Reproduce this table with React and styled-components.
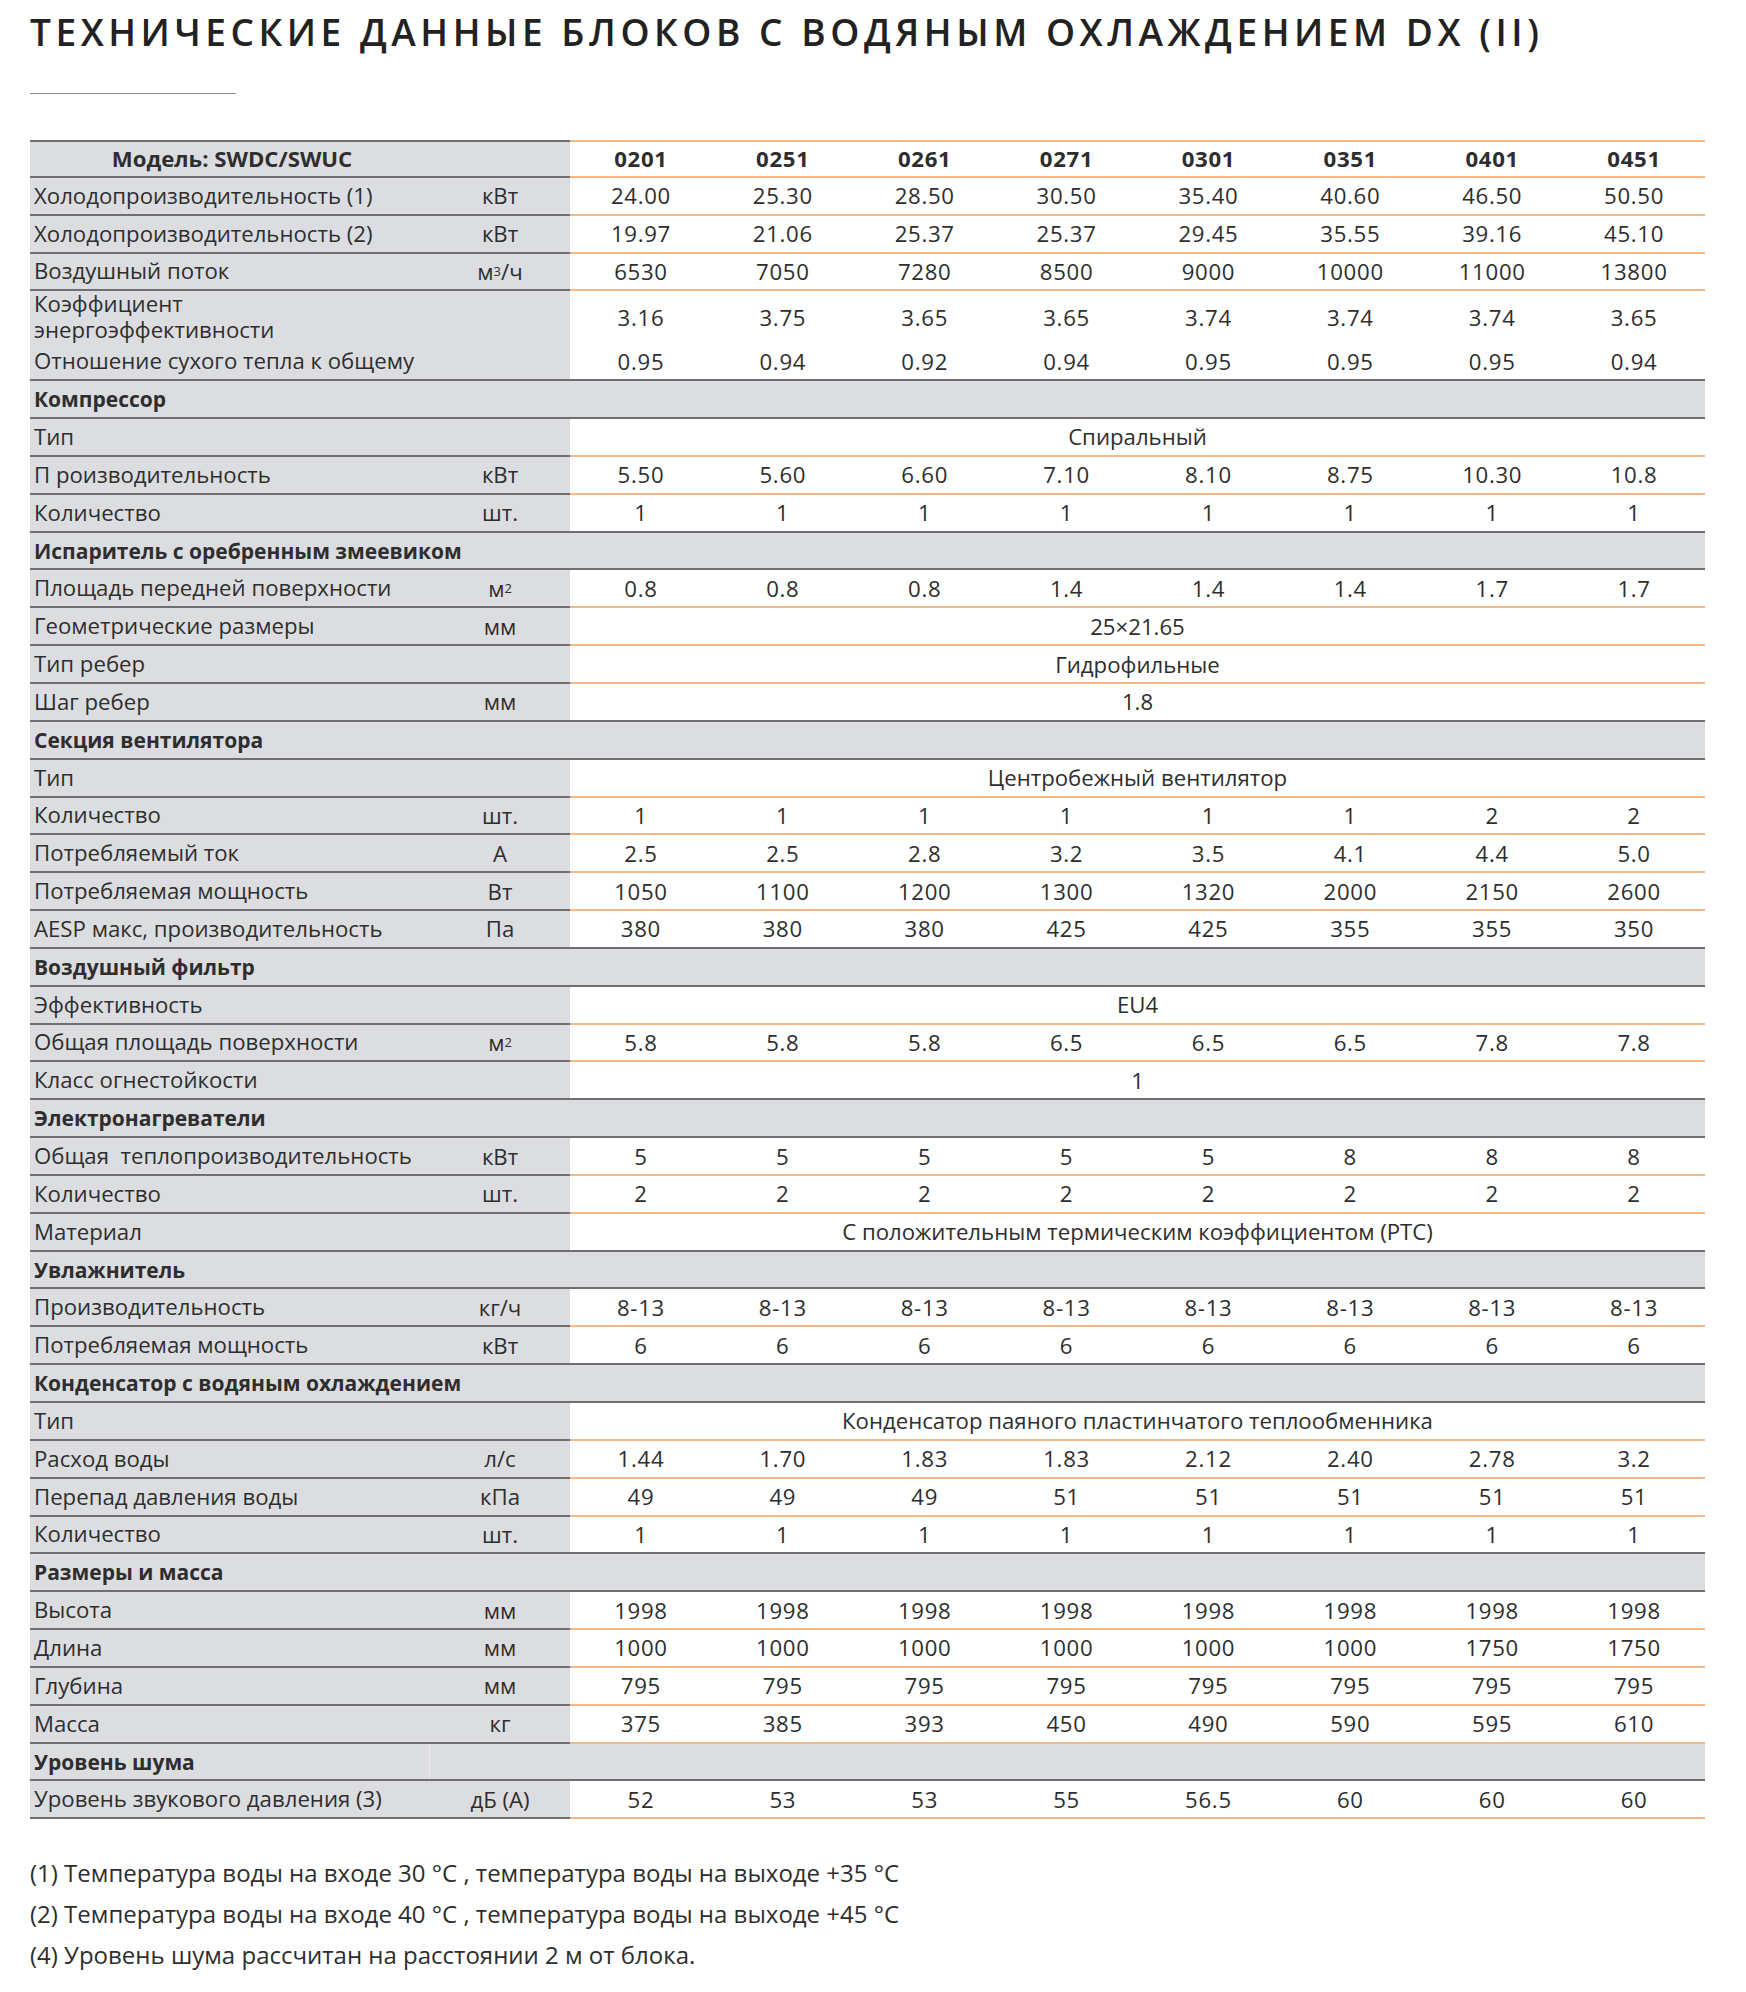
import React from 'react';
import styled, { createGlobalStyle } from 'styled-components';

const GRAY = '#dcdde0';
const DARK = '#6f6f71';
const ORANGE = '#f4b886';
const TEXT = '#2e2e2e';

const Global = createGlobalStyle`
  *, *::before, *::after { box-sizing: border-box; }
  html, body { margin: 0; padding: 0; background: #fff; }
  body { font-family: "Open Sans", "Noto Sans", sans-serif; color: ${TEXT}; }
`;

const Page = styled.div`
  width: 1746px;
  padding: 8px 30px 20px 30px;
`;

const Title = styled.h1`
  margin: 0;
  font-size: 37px;
  line-height: 48px;
  font-weight: 600;
  letter-spacing: 4.55px;
  color: #222;
  white-space: nowrap;
`;

const Rule = styled.div`
  width: 206px;
  height: 1px;
  background: #8a8a8a;
  margin: 37px 0 46px 0;
`;

const Table = styled.div`
  width: 1675px;
  font-size: 22.2px;
`;

const Row = styled.div`
  display: grid;
  grid-template-columns: 400px 140px repeat(8, 1fr);
  height: ${p => (p.$tall ? '52px' : '37.85px')};
`;

const Cell = styled.div`
  display: flex;
  align-items: center;
  border-bottom: 2px solid ${DARK};
  border-top: ${p => (p.$top ? `2px solid ${DARK}` : 'none')};
  white-space: pre;
`;

const LabelCell = styled(Cell)`
  background: ${GRAY};
  padding-left: 4px;
  line-height: 26px;
  justify-content: ${p => (p.$center ? 'center' : 'flex-start')};
  font-weight: ${p => (p.$bold ? 700 : 400)};
`;

const UnitCell = styled(Cell)`
  background: ${GRAY};
  justify-content: center;
`;

const DataCell = styled(Cell)`
  justify-content: center;
  background: #fff;
  letter-spacing: ${p => (p.$span ? '0' : '0.7px')};
  border-bottom-color: ${p => (p.$dark ? DARK : ORANGE)};
  border-top-color: ${ORANGE};
  font-weight: ${p => (p.$bold ? 700 : 400)};
  grid-column: ${p => (p.$span ? '3 / -1' : 'auto')};
`;

const SectionRow = styled.div`
  display: grid;
  grid-template-columns: ${p => (p.$split ? '400px 1fr' : '1fr')};
  height: 37.85px;
  background: ${GRAY};
  border-bottom: 2px solid ${DARK};
  font-size: 21px;
  font-weight: 700;
`;

const SectionLabel = styled.div`
  display: flex;
  align-items: center;
  padding-left: 4px;
  border-right: ${p => (p.$split ? '1px solid #ececee' : 'none')};
`;

const Sup = styled.sup`
  font-size: 13px;
  line-height: 0;
  vertical-align: 9px;
`;

const Notes = styled.div`
  margin-top: 33px;
  font-size: 24px;
  line-height: 41px;
  color: ${TEXT};
`;

const Note = styled.div``;

const models = ['0201', '0251', '0261', '0271', '0301', '0351', '0401', '0451'];
const rep = (v) => Array(8).fill(v);

const M2 = <>м<Sup>2</Sup></>;
const M3H = <>м<Sup>3</Sup>/ч</>;

const rows = [
  { label: 'Холодопроизводительность (1)', unit: 'кВт', values: ['24.00', '25.30', '28.50', '30.50', '35.40', '40.60', '46.50', '50.50'] },
  { label: 'Холодопроизводительность (2)', unit: 'кВт', values: ['19.97', '21.06', '25.37', '25.37', '29.45', '35.55', '39.16', '45.10'] },
  { label: 'Воздушный поток', unit: M3H, values: ['6530', '7050', '7280', '8500', '9000', '10000', '11000', '13800'] },
  { label: 'Коэффициент\nэнергоэффективности', unit: '', tall: true, values: ['3.16', '3.75', '3.65', '3.65', '3.74', '3.74', '3.74', '3.65'] },
  { label: 'Отношение сухого тепла к общему', unit: '', values: ['0.95', '0.94', '0.92', '0.94', '0.95', '0.95', '0.95', '0.94'] },
  { section: 'Компрессор' },
  { label: 'Тип', unit: '', span: 'Спиральный' },
  { label: 'П роизводительность', unit: 'кВт', values: ['5.50', '5.60', '6.60', '7.10', '8.10', '8.75', '10.30', '10.8'] },
  { label: 'Количество', unit: 'шт.', values: rep('1') },
  { section: 'Испаритель с оребренным змеевиком' },
  { label: 'Площадь передней поверхности', unit: M2, values: ['0.8', '0.8', '0.8', '1.4', '1.4', '1.4', '1.7', '1.7'] },
  { label: 'Геометрические размеры', unit: 'мм', span: '25×21.65' },
  { label: 'Тип ребер', unit: '', span: 'Гидрофильные' },
  { label: 'Шаг ребер', unit: 'мм', span: '1.8' },
  { section: 'Секция вентилятора' },
  { label: 'Тип', unit: '', span: 'Центробежный вентилятор' },
  { label: 'Количество', unit: 'шт.', values: ['1', '1', '1', '1', '1', '1', '2', '2'] },
  { label: 'Потребляемый ток', unit: 'А', values: ['2.5', '2.5', '2.8', '3.2', '3.5', '4.1', '4.4', '5.0'] },
  { label: 'Потребляемая мощность', unit: 'Вт', values: ['1050', '1100', '1200', '1300', '1320', '2000', '2150', '2600'] },
  { label: 'AESP макс, производительность', unit: 'Па', values: ['380', '380', '380', '425', '425', '355', '355', '350'] },
  { section: 'Воздушный фильтр' },
  { label: 'Эффективность', unit: '', span: 'EU4' },
  { label: 'Общая площадь поверхности', unit: M2, values: ['5.8', '5.8', '5.8', '6.5', '6.5', '6.5', '7.8', '7.8'] },
  { label: 'Класс огнестойкости', unit: '', span: '1' },
  { section: 'Электронагреватели' },
  { label: 'Общая  теплопроизводительность', unit: 'кВт', values: ['5', '5', '5', '5', '5', '8', '8', '8'] },
  { label: 'Количество', unit: 'шт.', values: rep('2') },
  { label: 'Материал', unit: '', span: 'С положительным термическим коэффициентом (PTC)' },
  { section: 'Увлажнитель' },
  { label: 'Производительность', unit: 'кг/ч', values: rep('8-13') },
  { label: 'Потребляемая мощность', unit: 'кВт', values: rep('6') },
  { section: 'Конденсатор с водяным охлаждением' },
  { label: 'Тип', unit: '', span: 'Конденсатор паяного пластинчатого теплообменника' },
  { label: 'Расход воды', unit: 'л/с', values: ['1.44', '1.70', '1.83', '1.83', '2.12', '2.40', '2.78', '3.2'] },
  { label: 'Перепад давления воды', unit: 'кПа', values: ['49', '49', '49', '51', '51', '51', '51', '51'] },
  { label: 'Количество', unit: 'шт.', values: rep('1') },
  { section: 'Размеры и масса' },
  { label: 'Высота', unit: 'мм', values: rep('1998') },
  { label: 'Длина', unit: 'мм', values: ['1000', '1000', '1000', '1000', '1000', '1000', '1750', '1750'] },
  { label: 'Глубина', unit: 'мм', values: rep('795') },
  { label: 'Масса', unit: 'кг', values: ['375', '385', '393', '450', '490', '590', '595', '610'] },
  { section: 'Уровень шума', split: true },
  { label: 'Уровень звукового давления (3)', unit: 'дБ (А)', values: ['52', '53', '53', '55', '56.5', '60', '60', '60'] },
];

export default function App() {
  return (
    <Page>
      <Global />
      <Title>ТЕХНИЧЕСКИЕ ДАННЫЕ БЛОКОВ С ВОДЯНЫМ ОХЛАЖДЕНИЕМ DX (II)</Title>
      <Rule />
      <Table>
        <Row>
          <LabelCell $top $center $bold>Модель: SWDC/SWUC</LabelCell>
          <UnitCell $top />
          {models.map((m) => (
            <DataCell key={m} $top $bold>{m}</DataCell>
          ))}
        </Row>
        {rows.map((r, i) => {
          if (r.section) {
            return (
              <SectionRow key={i} $split={r.split}>
                <SectionLabel $split={r.split}>{r.section}</SectionLabel>
                {r.split && <div />}
              </SectionRow>
            );
          }
          const next = rows[i + 1];
          const dark = next && next.section && !next.split;
          return (
            <Row key={i} $tall={r.tall}>
              <LabelCell>{r.label}</LabelCell>
              <UnitCell>{r.unit}</UnitCell>
              {r.span ? (
                <DataCell $span $dark={dark}>{r.span}</DataCell>
              ) : (
                r.values.map((v, j) => (
                  <DataCell key={j} $dark={dark}>{v}</DataCell>
                ))
              )}
            </Row>
          );
        })}
      </Table>
      <Notes>
        <Note>(1) Температура воды на входе 30 °С , температура воды на выходе +35 °С</Note>
        <Note>(2) Температура воды на входе 40 °С , температура воды на выходе +45 °С</Note>
        <Note>(4) Уровень шума рассчитан на расстоянии 2 м от блока.</Note>
      </Notes>
    </Page>
  );
}
